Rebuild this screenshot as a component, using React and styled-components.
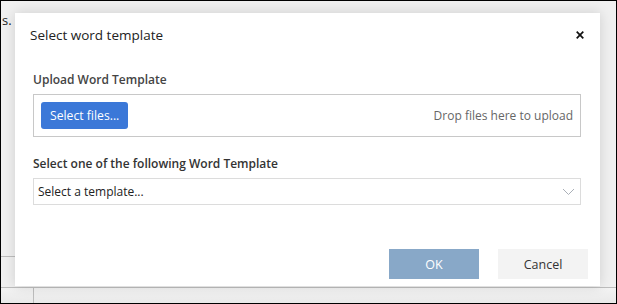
import React from 'react'
import styled, { createGlobalStyle } from 'styled-components'

const GlobalStyle = createGlobalStyle`
  html, body {
    margin: 0;
    padding: 0;
  }
  body {
    font-family: 'Open Sans', 'Noto Sans', sans-serif;
    color: #333;
  }
  * {
    box-sizing: border-box;
  }
`

const Page = styled.div`
  position: relative;
  width: 617px;
  height: 304px;
  overflow: hidden;
  background: #f0f0f0;
  border: 1px solid #000;
`

const BehindText = styled.div`
  padding: 11px 0 0 1px;
  font-size: 13px;
  line-height: 16px;
  color: #222;
`

const BehindRule = styled.div`
  position: absolute;
  left: 0;
  top: 255px;
  width: 15px;
  border-top: 1px solid #bdbdbd;
`

const BehindRow = styled.div`
  position: absolute;
  left: 0;
  right: 0;
  top: 286px;
  bottom: 0;
  border-top: 1px solid #bdbdbd;
  background: linear-gradient(#f3f3f3, #e9e9e9);
  .cell {
    width: 33px;
    height: 100%;
    border-right: 1px solid #bdbdbd;
  }
`

const Dialog = styled.div`
  position: absolute;
  left: 14px;
  top: 12px;
  width: 585px;
  height: 273px;
  background: #fff;
  box-shadow: 0 0 12px rgba(0, 0, 0, 0.14);
  display: flex;
  flex-direction: column;
`

const Header = styled.div`
  height: 44px;
  padding: 0 16px 0 15px;
  display: flex;
  align-items: center;
  justify-content: space-between;
`

const Title = styled.h2`
  margin: 0;
  font-size: 13.5px;
  font-weight: 400;
  color: #222;
`

const Close = styled.button`
  border: 0;
  background: none;
  padding: 0;
  width: 8px;
  height: 8px;
  display: flex;
  cursor: pointer;
`

const Body = styled.div`
  padding: 0 19px 0 18px;
  display: flex;
  flex-direction: column;
`

const Label = styled.div`
  margin-top: ${(p) => p.$top}px;
  height: 20px;
  line-height: 20px;
  font-size: 12px;
  font-weight: 600;
  color: ${(p) => p.$color};
`

const DropZone = styled.div`
  margin-top: 4px;
  height: 43px;
  border: 1px solid #c8c8c8;
  padding: 0 7px;
  display: flex;
  align-items: center;
  justify-content: space-between;
`

const PickButton = styled.button`
  height: 27px;
  padding: 0 9px;
  border: 0;
  border-radius: 3px;
  background: #3b78d8;
  color: #fff;
  font-family: inherit;
  font-size: 12.2px;
  cursor: pointer;
`

const DropHint = styled.span`
  font-size: 12px;
  color: #666;
`

const Select = styled.div`
  margin-top: 4px;
  height: 27px;
  border: 1px solid #dcdcdc;
  padding: 0 5px 0 4px;
  display: flex;
  align-items: center;
  justify-content: space-between;
  font-size: 12px;
  color: #222;
`

const Footer = styled.div`
  margin-top: auto;
  padding: 0 12px 7px 0;
  display: flex;
  justify-content: flex-end;
  gap: 19px;
`

const FooterButton = styled.button`
  width: 90px;
  height: 30px;
  border: 0;
  font-family: inherit;
  font-size: 12.5px;
  cursor: pointer;
  background: ${(p) => (p.$primary ? '#88a8c8' : '#f3f3f3')};
  color: ${(p) => (p.$primary ? '#fff' : '#333')};
`

const App = () => {
  return (
    <>
      <GlobalStyle />
      <Page>
        <BehindText>s.</BehindText>
        <BehindRule />
        <BehindRow>
          <div className='cell' />
        </BehindRow>
        <Dialog>
          <Header>
            <Title>Select word template</Title>
            <Close aria-label='Close'>
              <svg width='8' height='8' viewBox='0 0 8 8'>
                <path d='M0.7 0.7L7.3 7.3M7.3 0.7L0.7 7.3' stroke='#111' strokeWidth='1.7' />
              </svg>
            </Close>
          </Header>
          <Body>
            <Label $top={13} $color='#444'>Upload Word Template</Label>
            <DropZone>
              <PickButton>Select files...</PickButton>
              <DropHint>Drop files here to upload</DropHint>
            </DropZone>
            <Label $top={17} $color='#333'>Select one of the following Word Template</Label>
            <Select>
              <span>Select a template...</span>
              <svg width='13' height='8' viewBox='0 0 13 8'>
                <path d='M1 1L6.5 6.5L12 1' fill='none' stroke='#aab0b8' strokeWidth='1' />
              </svg>
            </Select>
          </Body>
          <Footer>
            <FooterButton $primary>OK</FooterButton>
            <FooterButton>Cancel</FooterButton>
          </Footer>
        </Dialog>
      </Page>
    </>
  )
}

export default App
